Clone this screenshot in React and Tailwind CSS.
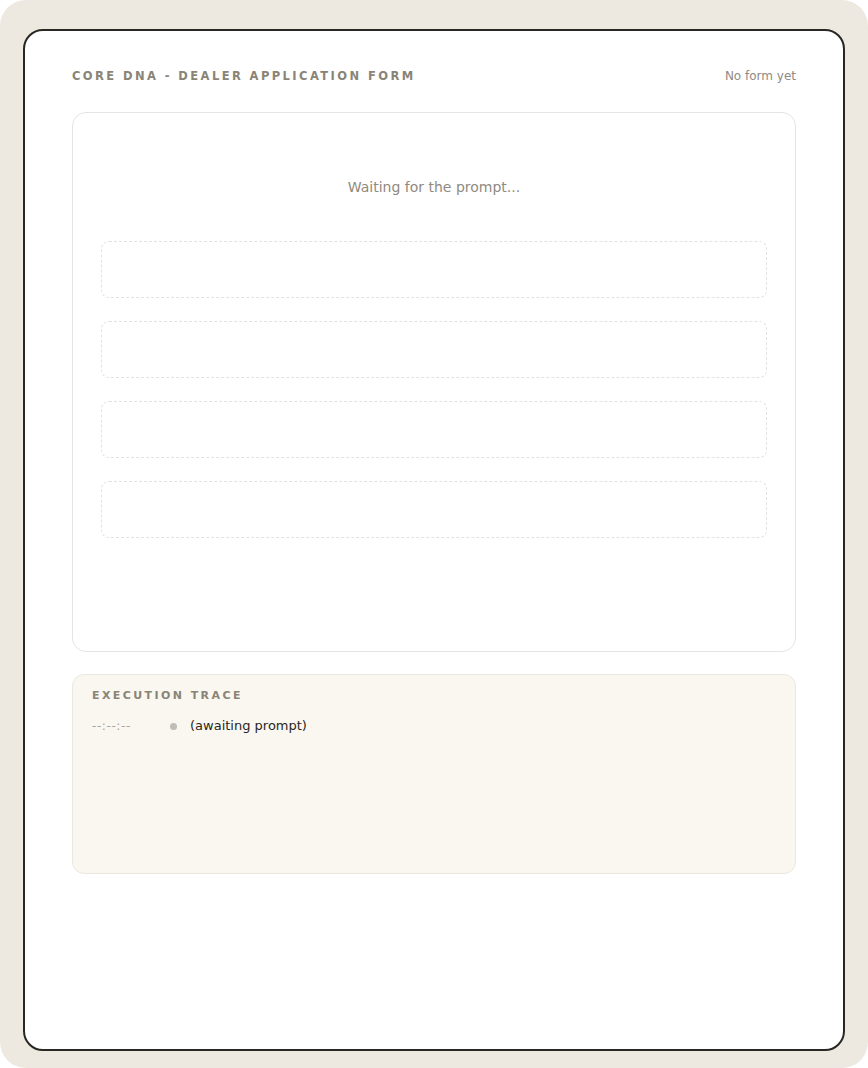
import React from "react";

export default function App() {
  const font = { fontFamily: '"DejaVu Sans", Verdana, sans-serif' };
  return (
    <div className="w-[868px] h-[1068px] bg-white" style={font}>
      <div className="w-[868px] h-[1068px] rounded-[26px] bg-[#ede9e0] pl-[23px] pr-[23px] pt-[29px] pb-[17px]">
        <div className="h-full w-full rounded-[20px] border-2 border-[#2a2622] bg-white px-[47px] pt-[37px]">
          <div className="flex items-center justify-between h-[16px]">
            <div className="text-[11.5px] font-bold tracking-[0.21em] text-[#8a8476] leading-[16px]">
              CORE DNA - DEALER APPLICATION FORM
            </div>
            <div className="text-[12px] text-[#8f8a84] leading-[16px]">No form yet</div>
          </div>
          <div className="mt-[28px] h-[540px] rounded-[14px] border-[1.5px] border-[#e6e4e0] bg-white px-[28px] pt-[64px]">
            <div className="text-center text-[14px] leading-[20px] text-[#8f8a80]">
              Waiting for the prompt...
            </div>
            <div className="mt-[44px] flex flex-col gap-[23px]">
              {[0, 1, 2, 3].map((i) => (
                <div
                  key={i}
                  className="h-[57px] rounded-[8px] border-[1.5px] border-dashed border-[#e4e2de]"
                />
              ))}
            </div>
          </div>
          <div className="mt-[22px] h-[200px] rounded-[12px] border-[1.5px] border-[#ebe8e0] bg-[#f9f7f0] px-[19px] pt-[13px]">
            <div className="text-[11px] font-bold tracking-[0.22em] text-[#8a8476] leading-[16px]">
              EXECUTION TRACE
            </div>
            <div className="mt-[12px] flex items-center h-[20px]">
              <div className="w-[78px] text-[12px] tracking-[0.05em] text-[#a9a49c]">--:--:--</div>
              <div className="w-[7px] h-[7px] rounded-full bg-[#c0bcb6]" />
              <div className="ml-[13px] text-[13px] text-[#2a2622]">(awaiting prompt)</div>
            </div>
          </div>
        </div>
      </div>
    </div>
  );
}
